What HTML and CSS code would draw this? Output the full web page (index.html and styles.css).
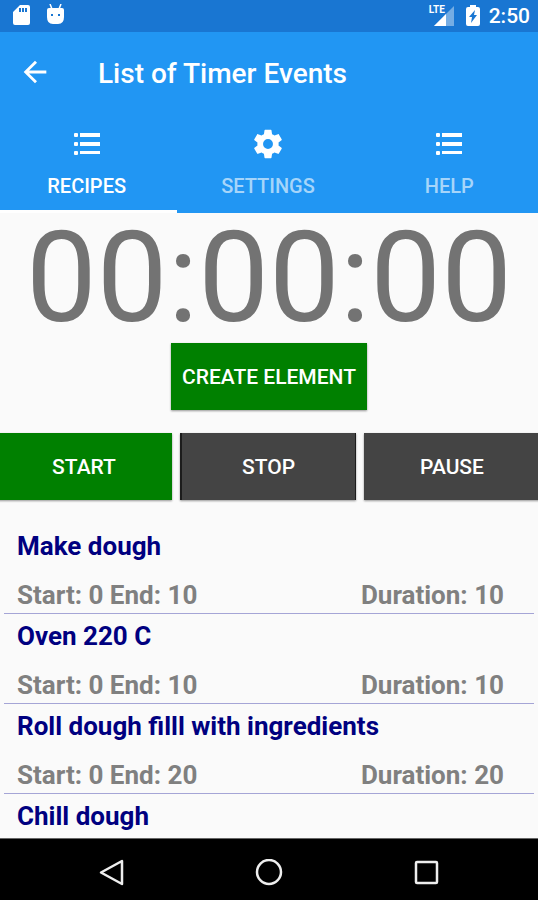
FILE: index.html
```html
<!DOCTYPE html>
<html lang="en">
<head>
<meta charset="utf-8">
<meta name="viewport" content="width=device-width, initial-scale=1">
<title>List of Timer Events</title>
<link rel="stylesheet" href="styles.css">
</head>
<body>
<div class="status">
  <svg class="status-icon" viewBox="0 0 20 24" width="20" height="24" aria-hidden="true"><path fill="#fff" fill-rule="evenodd" d="M8 1h8q2 0 2 2v16q0 2-2 2H3q-2 0-2-2V8zM7 4v4h2V4zM10 4v4h2V4zM13 4v4h2V4z"/></svg>
  <svg class="status-icon" viewBox="0 0 20 24" width="20" height="24" aria-hidden="true"><path stroke="#fff" stroke-width="1.500" fill="none" d="M4 0l2 5M15 0l-2 5"/><path fill="#fff" fill-rule="evenodd" d="M3 4h13q2 0 2 2v7q0 7-6 7H7q-6 0-6-7V6q0-2 2-2zM5 10v2h2v-2zM12 10v2h2v-2z"/></svg>
  <span class="spacer"></span>
  <span class="network">
    <svg viewBox="0 0 26 24" width="26" height="24" aria-hidden="true"><path fill="#75ade4" d="M25 2v20H5z"/><path fill="#fff" d="M17 10v12H5z"/></svg>
    <span class="lte">LTE</span>
  </span>
  <svg viewBox="0 0 16 24" width="16" height="24" aria-hidden="true"><path fill="#fff" fill-rule="evenodd" d="M5 1h6v2h2q2 0 2 2v15q0 2-2 2H3q-2 0-2-2V5q0-2 2-2h2zM10 6l-6 7h3l-1 6 6-8H9z"/></svg>
  <span class="clock">2:50</span>
</div>
<header class="appbar">
  <div class="toolbar">
    <button class="back" type="button" aria-label="Back"><svg viewBox="0 0 24 24" width="34" height="34"><path fill="#fff" d="M20 11H7.830l5.590-5.590L12 4l-8 8 8 8 1.410-1.410L7.830 13H20z"/></svg></button>
    <h1 class="title">List of Timer Events</h1>
  </div>
  <nav class="tabs">
    <a class="tab active" href="#recipes" aria-current="page"><svg viewBox="0 0 28 24" width="28" height="24"><g fill="#fff"><rect x="1" y="1" width="4" height="4" rx="1"/><rect x="1" y="10" width="4" height="4" rx="1"/><rect x="1" y="19" width="4" height="4" rx="1"/><path d="M7 1h20v4H7zM7 10h20v4H7zM7 19h20v3H7z"/></g></svg>RECIPES</a>
    <a class="tab" href="#settings"><svg viewBox="0 0 24 24" width="34" height="34"><path fill="#fff" d="M19.430 12.980c.04-.32.07-.64.07-.98s-.03-.66-.07-.98l2.110-1.650c.19-.15.24-.42.12-.64l-2-3.460c-.12-.22-.39-.3-.61-.22l-2.490 1c-.52-.4-1.080-.73-1.690-.98l-.38-2.650C14.460 2.180 14.250 2 14 2h-4c-.25 0-.46.18-.49.42l-.38 2.650c-.61.25-1.170.59-1.690.98l-2.490-1c-.23-.09-.49 0-.61.22l-2 3.460c-.13.22-.07.49.12.64l2.110 1.650c-.04.32-.07.65-.07.98s.03.66.07.98l-2.110 1.650c-.19.15-.24.42-.12.64l2 3.460c.12.22.39.3.61.22l2.490-1c.52.4 1.080.73 1.690.98l.38 2.650c.03.24.24.42.49.42h4c.25 0 .46-.18.49-.42l.38-2.650c.61-.25 1.170-.59 1.690-.98l2.490 1c.23.09.49 0 .61-.22l2-3.460c.12-.22.07-.49-.12-.64zM12 15.500a3.500 3.500 0 1 1 0-7 3.500 3.500 0 0 1 0 7z"/></svg>SETTINGS</a>
    <a class="tab" href="#help"><svg viewBox="0 0 28 24" width="28" height="24"><g fill="#fff"><rect x="1" y="1" width="4" height="4" rx="1"/><rect x="1" y="10" width="4" height="4" rx="1"/><rect x="1" y="19" width="4" height="4" rx="1"/><path d="M7 1h20v4H7zM7 10h20v4H7zM7 19h20v3H7z"/></g></svg>HELP</a>
  </nav>
</header>
<main class="content">
  <div class="timer" role="timer">00:00:00</div>
  <button class="btn go create" type="button">CREATE ELEMENT</button>
  <div class="controls">
    <button class="btn go" type="button">START</button>
    <button class="btn stop" type="button">STOP</button>
    <button class="btn" type="button">PAUSE</button>
  </div>
  <ul class="events">
    <li class="event"><h2 class="name">Make dough</h2><div class="meta"><span>Start: 0 End: 10</span><span>Duration: 10</span></div></li>
    <li class="event"><h2 class="name">Oven 220 C</h2><div class="meta"><span>Start: 0 End: 10</span><span>Duration: 10</span></div></li>
    <li class="event"><h2 class="name">Roll dough filll with ingredients</h2><div class="meta"><span>Start: 0 End: 20</span><span>Duration: 20</span></div></li>
    <li class="event"><h2 class="name">Chill dough</h2></li>
  </ul>
</main>
<footer class="navbar">
  <button class="nav" type="button" aria-label="Back"><svg viewBox="0 0 28 28" width="28" height="28"><path d="M25 2v23L4 13.500z"/></svg></button>
  <button class="nav" type="button" aria-label="Home"><svg viewBox="0 0 28 28" width="28" height="28"><circle cx="14" cy="13" r="12"/></svg></button>
  <button class="nav" type="button" aria-label="Overview"><svg viewBox="0 0 28 28" width="28" height="28"><rect x="3" y="3" width="21" height="21" rx="1"/></svg></button>
</footer>
</body>
</html>
```
FILE: styles.css
```css
* {
  box-sizing: border-box;
}

body {
  margin: 0;
  height: 100vh;
  display: flex;
  flex-direction: column;
  overflow: hidden;
  background: #fafafa;
  font-family: Roboto, "Liberation Sans", sans-serif;
}

button {
  border: 0;
  padding: 0;
  background: none;
  font: inherit;
}

svg {
  display: block;
}

.status {
  display: flex;
  align-items: center;
  height: 32px;
  padding: 0 8px 0 12px;
  background: #1976d2;
  color: #fff;
}

.status-icon {
  margin-right: 14px;
}

.spacer {
  flex: 1;
}

.network {
  position: relative;
  margin-right: 10px;
}

.lte {
  position: absolute;
  top: 0;
  left: 0;
  font-size: 10px;
  line-height: 12px;
  font-weight: 700;
}

.clock {
  margin-left: 8px;
  font-size: 21px;
  font-weight: 500;
}

.appbar {
  background: #2196f3;
  color: #fff;
}

.toolbar {
  display: flex;
  align-items: center;
  height: 80px;
}

.back {
  margin: 0 46px 0 18px;
}

.title {
  margin: 0;
  padding-top: 4px;
  font-size: 28px;
  line-height: 32px;
  font-weight: 500;
}

.tabs {
  display: grid;
  grid-template-columns: repeat(3, 1fr);
  margin: 0 -2px 0 -4px;
}

.tab {
  display: grid;
  grid-template-rows: 64px 20px;
  place-items: center;
  height: 101px;
  align-content: start;
  color: #a6d5fa;
  font-size: 20px;
  line-height: 20px;
  font-weight: 500;
  text-decoration: none;
}

.tab.active {
  color: #fff;
  border-bottom: 3px solid #fff;
}

.content {
  flex: 1;
  min-height: 0;
  display: flex;
  flex-direction: column;
}

.timer {
  color: #737373;
  font-size: 126px;
  line-height: 130px;
  text-align: center;
}

.btn {
  height: 67px;
  background: #444;
  color: #fff;
  font-size: 21px;
  font-weight: 500;
  box-shadow: 0 1px 2px #0006;
}

.btn.go {
  background: #008000;
}

.btn.stop {
  border: solid #1c1c1c;
  border-width: 0 1px 0 2px;
}

.create {
  align-self: center;
  flex: none;
  padding: 0 11px;
}

.controls {
  display: grid;
  grid-template-columns: repeat(3, 1fr);
  gap: 8px;
  margin: 23px -2px 0 -4px;
}

.events {
  flex: 1;
  min-height: 0;
  overflow: hidden;
  list-style: none;
  margin: 24px 4px 0;
  padding: 0;
}

.event {
  padding: 5px 30px 1px 13px;
  border-bottom: 1px solid #a5a5d6;
}

.name {
  margin: 0;
  color: #000080;
  font-size: 26px;
  line-height: 34px;
  font-weight: 700;
}

.meta {
  display: flex;
  justify-content: space-between;
  margin-top: 15px;
  color: #808080;
  font-size: 26px;
  line-height: 34px;
  font-weight: 700;
}

.event:last-child {
  border-bottom: 0;
}

.navbar {
  display: flex;
  justify-content: center;
  align-items: center;
  height: 62px;
  padding-top: 6px;
  border-top: 1px solid #666;
  background: #000;
}

.nav {
  display: flex;
  justify-content: center;
  width: 29.4%;
}

.nav svg {
  fill: none;
  stroke: #eee;
  stroke-width: 2.5;
  stroke-linejoin: round;
}
```
